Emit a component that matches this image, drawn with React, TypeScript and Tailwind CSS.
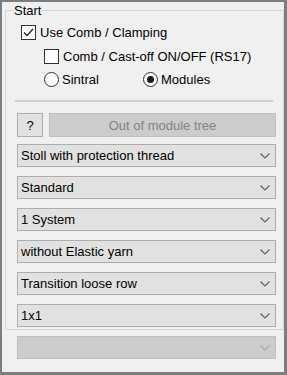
import React from 'react';

function CheckBox({ checked, label }: { checked: boolean; label: string }) {
  return (
    <div className="flex items-center h-[15px]">
      <div className="w-[15px] h-[15px] border border-[#333333] bg-white flex items-center justify-center">
        {checked && (
          <svg width="11" height="9" viewBox="0 0 11 9">
            <polyline points="1,4.5 4,7.5 10,1" fill="none" stroke="#222222" strokeWidth="1.3" />
          </svg>
        )}
      </div>
      <span className="ml-[4px]">{label}</span>
    </div>
  );
}

function Radio({ checked, label }: { checked: boolean; label: string }) {
  return (
    <div className="flex items-center h-[15px]">
      <div className="w-[15px] h-[15px] rounded-full border border-[#333333] bg-white flex items-center justify-center">
        {checked && <div className="w-[7px] h-[7px] rounded-full bg-[#1a1a1a]" />}
      </div>
      <span className="ml-[3px]">{label}</span>
    </div>
  );
}

function Chevron({ color }: { color: string }) {
  return (
    <svg width="10" height="6" viewBox="0 0 10 6" className="mr-[5px]">
      <polyline points="0.5,0.5 5,5 9.5,0.5" fill="none" stroke={color} strokeWidth="1.1" />
    </svg>
  );
}

function Combo({ value, disabled }: { value?: string; disabled?: boolean }) {
  return (
    <div
      className={
        disabled
          ? 'h-[23px] w-[259px] border border-[#bfbfbf] bg-[#cccccc] flex items-center justify-between'
          : 'h-[23px] w-[259px] border border-[#adadad] bg-[#e1e1e1] flex items-center justify-between'
      }
    >
      <span className="pl-[3px] text-black">{value}</span>
      <Chevron color={disabled ? '#a8a8a8' : '#5f5f5f'} />
    </div>
  );
}

const combos = [
  'Stoll with protection thread',
  'Standard',
  '1 System',
  'without Elastic yarn',
  'Transition loose row',
  '1x1',
];

export default function App() {
  return (
    <div
      className="w-[287px] h-[375px] bg-[#f0f0f0] border-l-2 border-t-2 border-r-[3px] border-b-[3px] border-[#7d7d7d] text-[13px] leading-[15px] text-black"
      style={{ fontFamily: '"Liberation Sans", Arial, sans-serif' }}
    >
      <div className="relative ml-[3px] mt-[8px] w-[279px] h-[320px] border border-[#d6d6d6]">
        <span className="absolute left-[7px] top-[-8px] px-[1px] bg-[#f0f0f0] leading-[15px]">Start</span>

        <div className="pl-[15px] pt-[14px]">
          <CheckBox checked label="Use Comb / Clamping" />
          <div className="mt-[9px] pl-[23px]">
            <CheckBox checked={false} label="Comb / Cast-off ON/OFF (RS17)" />
          </div>
          <div className="mt-[8px] pl-[23px] flex">
            <div className="w-[99px]">
              <Radio checked={false} label="Sintral" />
            </div>
            <Radio checked label="Modules" />
          </div>
        </div>

        <div className="mt-[13px] ml-[9px] w-[258px] h-[2px] bg-[#d0d0d0]" />

        <div className="pl-[11px]">
          <div className="mt-[11px] flex gap-[6px]">
            <div className="w-[26px] h-[24px] border border-[#adadad] bg-[#e1e1e1] flex items-center justify-center">
              ?
            </div>
            <div className="w-[227px] h-[24px] border border-[#bfbfbf] bg-[#cccccc] flex items-center justify-center text-[#838383]">
              Out of module tree
            </div>
          </div>
          <div className="mt-[7px] flex flex-col gap-[9px]">
            {combos.map((c) => (
              <Combo key={c} value={c} />
            ))}
          </div>
        </div>
      </div>

      <div className="ml-[15px] mt-[6px]">
        <Combo disabled />
      </div>
    </div>
  );
}
